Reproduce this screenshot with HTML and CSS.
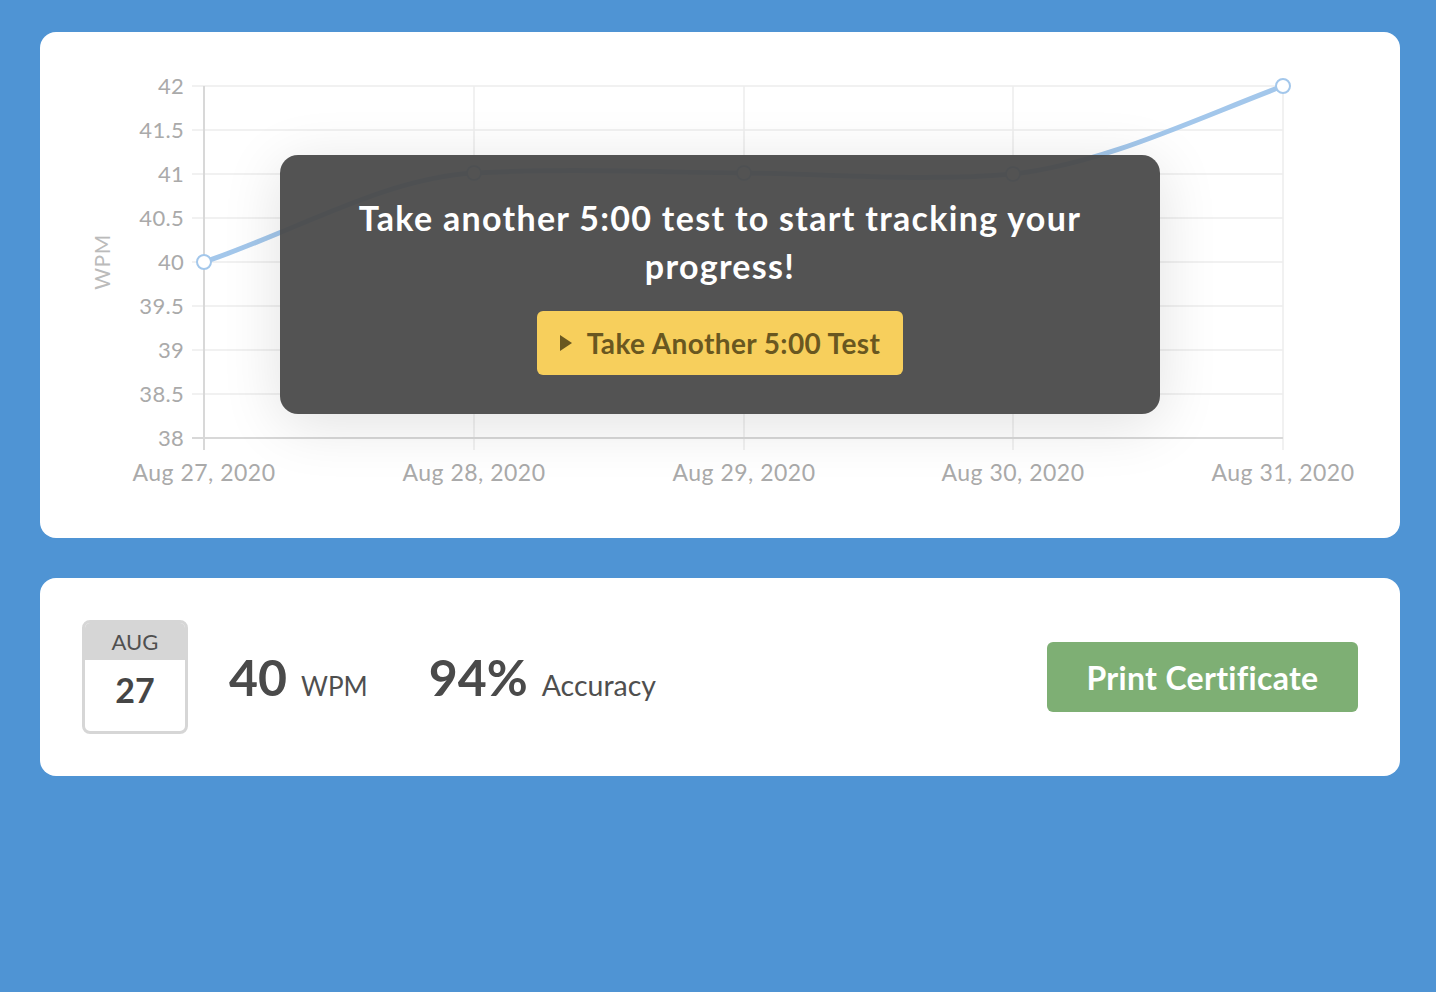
FILE: index.html
```html
<!DOCTYPE html>
<html>
<head>
<meta charset="utf-8">
<link rel="stylesheet" href="styles.css">
</head>
<body>
<div class="page">
  <section class="card chart-card">
    <svg class="chart" width="1360" height="506" viewBox="0 0 1360 506">
      <g class="grid">
        <line x1="164" y1="54" x2="1243" y2="54"/>
        <line x1="164" y1="98" x2="1243" y2="98"/>
        <line x1="164" y1="142" x2="1243" y2="142"/>
        <line x1="164" y1="186" x2="1243" y2="186"/>
        <line x1="164" y1="230" x2="1243" y2="230"/>
        <line x1="164" y1="274" x2="1243" y2="274"/>
        <line x1="164" y1="318" x2="1243" y2="318"/>
        <line x1="164" y1="362" x2="1243" y2="362"/>
        <line x1="434" y1="54" x2="434" y2="418"/>
        <line x1="704" y1="54" x2="704" y2="418"/>
        <line x1="973" y1="54" x2="973" y2="418"/>
        <line x1="1243" y1="54" x2="1243" y2="418"/>
        <line x1="152" y1="54" x2="164" y2="54"/>
        <line x1="152" y1="98" x2="164" y2="98"/>
        <line x1="152" y1="142" x2="164" y2="142"/>
        <line x1="152" y1="186" x2="164" y2="186"/>
        <line x1="152" y1="230" x2="164" y2="230"/>
        <line x1="152" y1="274" x2="164" y2="274"/>
        <line x1="152" y1="318" x2="164" y2="318"/>
        <line x1="152" y1="362" x2="164" y2="362"/>
      </g>
      <g class="axis">
        <line x1="164" y1="54" x2="164" y2="418"/>
        <line x1="152" y1="406" x2="1243" y2="406"/>
      </g>
      <g class="ylabels">
        <text x="144" y="62">42</text>
        <text x="144" y="106">41.5</text>
        <text x="144" y="150">41</text>
        <text x="144" y="194">40.5</text>
        <text x="144" y="238">40</text>
        <text x="144" y="282">39.5</text>
        <text x="144" y="326">39</text>
        <text x="144" y="370">38.5</text>
        <text x="144" y="414">38</text>
      </g>
      <text class="ytitle" x="70" y="230" transform="rotate(-90 70 230)">WPM</text>
      <g class="xlabels">
        <text x="164" y="449">Aug 27, 2020</text>
        <text x="434" y="449">Aug 28, 2020</text>
        <text x="704" y="449">Aug 29, 2020</text>
        <text x="973" y="449">Aug 30, 2020</text>
        <text x="1243" y="449">Aug 31, 2020</text>
      </g>
      <path class="series" d="M164,230 C254,200 344,146 434,141 C524,136 614,140 704,141 C794,142 883,150 973,142 C1063,132 1153,88 1243,54"/>
      <g class="points">
        <circle cx="164" cy="230" r="7"/>
        <circle cx="434" cy="141" r="7"/>
        <circle cx="704" cy="141" r="7"/>
        <circle cx="973" cy="142" r="7"/>
        <circle cx="1243" cy="54" r="7"/>
      </g>
    </svg>
    <div class="overlay">
      <p class="overlay-text">Take another 5:00 test to start tracking your progress!</p>
      <button class="btn-yellow">
        <svg class="play" width="12" height="16" viewBox="0 0 12 16"><path d="M0 0 L12 8 L0 16 Z"/></svg>
        <span>Take Another 5:00 Test</span>
      </button>
    </div>
  </section>

  <section class="card result-card">
    <div class="calendar">
      <div class="cal-month">AUG</div>
      <div class="cal-day">27</div>
    </div>
    <div class="stat first">
      <span class="stat-num">40</span>
      <span class="stat-unit">WPM</span>
    </div>
    <div class="stat">
      <span class="stat-num">94%</span>
      <span class="stat-unit acc">Accuracy</span>
    </div>
    <button class="btn-green">Print Certificate</button>
  </section>
</div>
</body>
</html>
```

FILE: styles.css
```css
* { box-sizing: border-box; }
html, body {
  margin: 0;
  padding: 0;
}
body {
  background: #4f94d4;
  font-family: Lato, "Open Sans", "Noto Sans", sans-serif;
  width: 1436px;
  height: 992px;
  overflow: hidden;
}
.page {
  padding: 32px 36px 0 40px;
  display: flex;
  flex-direction: column;
  gap: 40px;
}
.card {
  width: 1360px;
  background: #ffffff;
  border-radius: 16px;
}
.chart-card {
  position: relative;
  height: 506px;
}
.chart { display: block; }
.grid line {
  stroke: #ececec;
  stroke-width: 1.5;
}
.axis line {
  stroke: #d8d8d8;
  stroke-width: 2;
}
.ylabels text {
  font-family: Lato, sans-serif;
  font-size: 22px;
  letter-spacing: 0.3px;
  fill: #aaaaaa;
  text-anchor: end;
}
.ytitle {
  font-family: Lato, sans-serif;
  font-size: 21px;
  fill: #bbbbbb;
  text-anchor: middle;
  letter-spacing: 0.5px;
}
.xlabels text {
  font-family: Lato, sans-serif;
  font-size: 23px;
  letter-spacing: 0.5px;
  fill: #aaaaaa;
  text-anchor: middle;
}
.series {
  fill: none;
  stroke: #a3c7eb;
  stroke-width: 5;
}
.points circle {
  fill: #ffffff;
  stroke: #a3c7eb;
  stroke-width: 2;
}
.overlay {
  position: absolute;
  left: 240px;
  top: 123px;
  width: 880px;
  height: 259px;
  background: rgba(74, 74, 74, 0.95);
  border-radius: 18px;
  box-shadow: 0 10px 60px rgba(0, 0, 0, 0.12);
  display: flex;
  flex-direction: column;
  align-items: center;
  padding: 39px 60px 0;
}
.overlay-text {
  margin: 0;
  color: #ffffff;
  font-weight: 700;
  font-size: 34px;
  line-height: 48px;
  text-align: center;
  letter-spacing: 1.3px;
}
.btn-yellow {
  margin-top: 21px;
  height: 64px;
  width: 366px;
  border: none;
  border-radius: 6px;
  background: #f7cf5c;
  color: #695720;
  font-family: Lato, sans-serif;
  font-weight: 700;
  font-size: 28px;
  letter-spacing: 0.4px;
  display: flex;
  align-items: center;
  justify-content: center;
  gap: 15px;
  padding: 0;
}
.play path { fill: #695720; }

.result-card {
  height: 198px;
  display: flex;
  align-items: center;
  padding: 0 42px;
}
.calendar {
  width: 106px;
  height: 114px;
  border-radius: 8px;
  border: 3px solid #d6d6d6;
  display: flex;
  flex-direction: column;
  overflow: hidden;
  margin-right: 41px;
}
.cal-month {
  background: #d6d6d6;
  height: 37px;
  text-align: center;
  font-size: 22px;
  line-height: 37px;
  color: #505050;
}
.cal-day {
  flex: 1;
  text-align: center;
  font-size: 34px;
  font-weight: 700;
  color: #454545;
  padding-top: 8px;
  line-height: 44px;
}
.stat {
  display: flex;
  align-items: baseline;
  gap: 14px;
  color: #4a4a4a;
}
.stat.first { margin-right: 61px; }
.stat-num {
  font-size: 50px;
  font-weight: 700;
}
.stat-unit {
  font-size: 26px;
  color: #4f4f4f;
}
.stat-unit.acc { font-size: 28.5px; }
.btn-green {
  margin-left: auto;
  width: 311px;
  height: 70px;
  border: none;
  border-radius: 6px;
  background: #7eaf74;
  color: #ffffff;
  font-family: Lato, sans-serif;
  font-weight: 700;
  font-size: 32px;
  letter-spacing: 0.3px;
  padding: 0;
}
```
